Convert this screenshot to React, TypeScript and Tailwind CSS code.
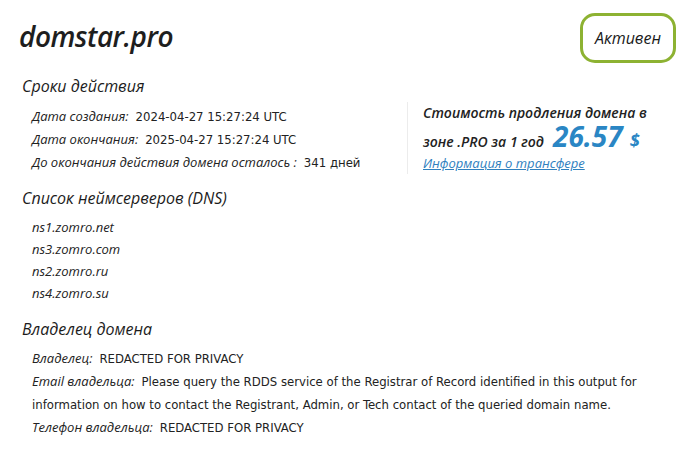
import React from "react";

const label = "italic text-[#222]";
const lf = { fontFamily: '"Open Sans", "DejaVu Sans", sans-serif' } as const;
const vf = { fontFamily: '"DejaVu Sans Condensed", "Liberation Sans Narrow", "Liberation Sans", sans-serif' } as const;

function Row({ k, v }: { k: string; v: React.ReactNode }) {
  return (
    <div className="h-[23px] flex items-center text-[13px] leading-[23px] whitespace-nowrap">
      <span className={label} style={lf}>{k}</span>
      <span className="ml-[7px] text-[13px] text-[#222]" style={vf}>{v}</span>
    </div>
  );
}

export default function App() {
  return (
    <div className="w-[693px] h-[452px] bg-white text-[#1c1c1c] pl-[19px] pr-[17px] pt-[13px]">
      <div className="flex justify-between items-start">
        <h1 className="mt-[6px] text-[28px] leading-[34px] font-semibold italic tracking-[-0.5px] text-[#1e1e1e]" style={lf}>domstar.pro</h1>
        <div className="w-[96px] h-[50px] rounded-[15px] border-[3px] border-[#8db232] flex items-center justify-center text-[16px] italic text-[#1a1a1a]" style={lf}>
          Активен
        </div>
      </div>

      <div className="flex mt-[12px]">
        <div className="w-[388px]">
          <h2 className="pl-[3px] text-[16px] leading-[22px] italic text-[#1c1c1c]" style={lf}>Сроки действия</h2>
          <div className="pl-[13px] mt-[8px]">
            <Row k="Дата создания:" v="2024-04-27 15:27:24 UTC" />
            <Row k="Дата окончания:" v="2025-04-27 15:27:24 UTC" />
            <Row k="До окончания действия домена осталось :" v="341 дней" />
          </div>
        </div>
        <div className="mt-[27px] border-l border-[#ececec] pl-[15px] h-[72px] flex flex-col">
          <div className="h-[22px] text-[14px] leading-[22px] italic font-semibold text-[#222] whitespace-nowrap" style={lf}>Стоимость продления домена в</div>
          <div className="h-[24px] flex items-baseline text-[14px] leading-[24px] italic font-semibold text-[#222] whitespace-nowrap" style={lf}>
            <span>зоне .PRO за 1 год</span>
            <span className="ml-[9px] text-[28px] leading-[24px] font-bold text-[#2a86c4]">26.57</span>
            <span className="ml-[7px] text-[18px] font-bold text-[#2a86c4]">$</span>
          </div>
          <a className="mt-[6px] text-[13px] leading-[18px] italic underline text-[#2f80be]" style={lf}>Информация о трансфере</a>
        </div>
      </div>

      <h2 className="mt-[13px] pl-[3px] text-[16px] leading-[22px] italic text-[#1c1c1c]" style={lf}>Список неймсерверов (DNS)</h2>
      <div className="pl-[13px] mt-[7px] text-[13px] italic text-[#222]" style={lf}>
        <div className="h-[22px] leading-[22px]">ns1.zomro.net</div>
        <div className="h-[22px] leading-[22px]">ns3.zomro.com</div>
        <div className="h-[22px] leading-[22px]">ns2.zomro.ru</div>
        <div className="h-[22px] leading-[22px]">ns4.zomro.su</div>
      </div>

      <h2 className="mt-[14px] pl-[3px] text-[16px] leading-[22px] italic text-[#1c1c1c]" style={lf}>Владелец домена</h2>
      <div className="pl-[13px] mt-[7px]">
        <Row k="Владелец:" v="REDACTED FOR PRIVACY" />
        <div className="text-[13px] leading-[23px] whitespace-nowrap">
          <span className={label} style={lf}>Email владельца:</span>
          <span className="ml-[7px] text-[13px] text-[#222]" style={vf}>Please query the RDDS service of the Registrar of Record identified in this output for</span>
          <br />
          <span className="text-[13px] text-[#222]" style={vf}>information on how to contact the Registrant, Admin, or Tech contact of the queried domain name.</span>
        </div>
        <Row k="Телефон владельца:" v="REDACTED FOR PRIVACY" />
      </div>
    </div>
  );
}
